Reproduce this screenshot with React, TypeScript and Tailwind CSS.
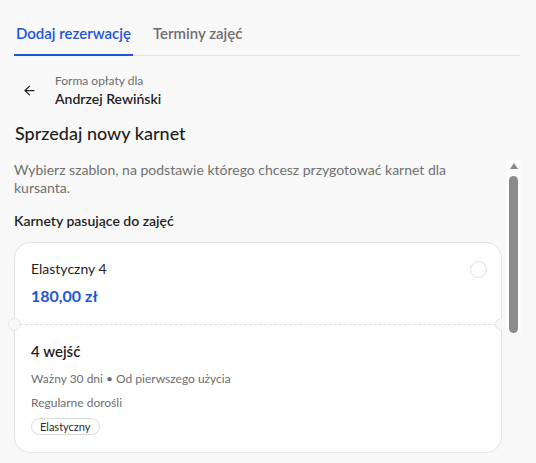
import { ArrowLeft } from "lucide-react";

const font = { fontFamily: "Lato, 'Noto Sans', sans-serif" };

function Scrollbar() {
  return (
    <div className="w-[15px] shrink-0 bg-[#fcfcfc] flex flex-col items-center pt-[3px]">
      <div className="w-0 h-0 border-l-[4px] border-r-[4px] border-b-[6px] border-l-transparent border-r-transparent border-b-[#8a8a8a]" />
      <div className="mt-[7px] w-[9px] h-[157px] rounded-full bg-[#8c8c8c]" />
    </div>
  );
}

function PassCard() {
  return (
    <div className="relative bg-white border border-[#e3e3e3] rounded-[16px]">
      <div className="px-4 pt-[15px] pb-[16px] flex items-start justify-between">
        <div>
          <p className="text-[14px] text-[#1f1f1f] leading-5 mt-[1px]">Elastyczny 4</p>
          <p className="text-[16px] font-bold text-[#1d55d6] leading-6 mt-[5px]">180,00 zł</p>
        </div>
        <span className="mt-[3px] mr-[-2px] w-[17px] h-[17px] rounded-full border border-[#dcdcdc] bg-white" />
      </div>
      <div className="relative border-t border-dashed border-[#dedede]">
        <span className="absolute -left-[7px] -top-[7px] w-[13px] h-[13px] rounded-full bg-[#f8f8f8] border border-[#e6e6e6]" />
        <span className="absolute -right-[7px] -top-[7px] w-[13px] h-[13px] rounded-full bg-[#f8f8f8] border border-[#e6e6e6]" />
      </div>
      <div className="px-4 pt-[16px] pb-[15px]">
        <p className="text-[15px] font-semibold text-[#1f1f1f] leading-5">4 wejść</p>
        <p className="text-[12px] text-[#6e6e6e] leading-4 mt-[10px]">Ważny 30 dni • Od pierwszego użycia</p>
        <p className="text-[12px] text-[#6e6e6e] leading-4 mt-[8px]">Regularne dorośli</p>
        <span className="inline-block mt-[7px] px-[8px] h-[17px] leading-[15px] rounded-full border border-[#d9d9d9] text-[11px] text-[#2a2a2a]">
          Elastyczny
        </span>
      </div>
    </div>
  );
}

export default function App() {
  return (
    <div className="w-[536px] h-[463px] overflow-hidden bg-[#f8f8f8]" style={font}>
      <div className="w-[521px]">
        <div className="ml-[14px] mr-[1px] pt-[22px] flex border-b border-[#e2e2e2]">
          <div className="px-[2px] pb-[9px] border-b-2 border-[#1d55d6] -mb-px text-[15px] font-semibold text-[#1d55d6]">
            Dodaj rezerwację
          </div>
          <div className="ml-[20px] pb-[9px] text-[15px] font-semibold text-[#6f6f6f]">Terminy zajęć</div>
        </div>

        <div className="mt-[17px] ml-[22px] flex items-center gap-[18px]">
          <ArrowLeft className="w-[15px] h-[15px] text-[#1f1f1f]" strokeWidth={2} />
          <div>
            <p className="text-[12px] text-[#6e6e6e] leading-4">Forma opłaty dla</p>
            <p className="text-[14px] font-semibold text-[#1f1f1f] leading-5">Andrzej Rewiński</p>
          </div>
        </div>

        <h2 className="mt-[12px] ml-[15px] text-[18px] font-medium text-[#1f1f1f] leading-6">Sprzedaj nowy karnet</h2>

        <div className="mt-[15px] flex h-[303px]">
          <div className="pl-[14px] w-[502px] overflow-hidden shrink-0">
            <p className="pt-[1px] text-[14px] text-[#707070] leading-[18px]">
              Wybierz szablon, na podstawie którego chcesz przygotować karnet dla kursanta.
            </p>
            <p className="mt-[14px] text-[14px] font-semibold text-[#1f1f1f] leading-5">Karnety pasujące do zajęć</p>
            <div className="mt-[11px]">
              <PassCard />
            </div>
          </div>
          <div className="ml-[4px]">
            <Scrollbar />
          </div>
        </div>
      </div>
    </div>
  );
}
